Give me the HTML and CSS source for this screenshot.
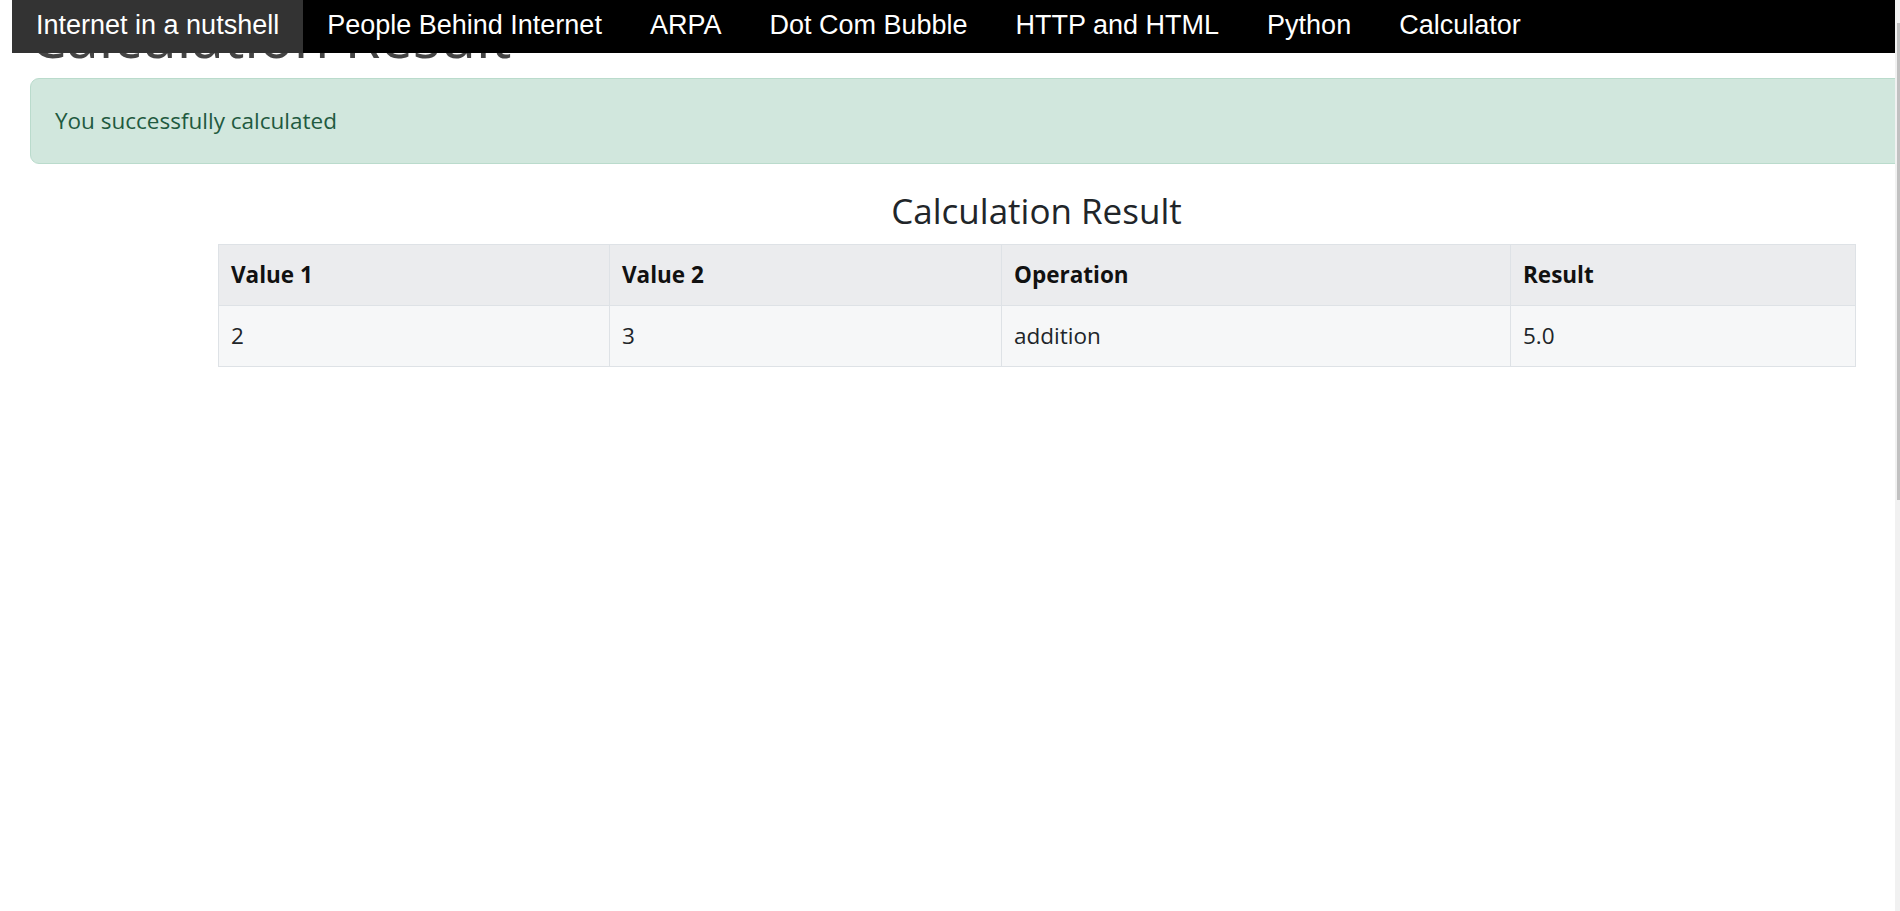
FILE: index.html
```html
<!DOCTYPE html>
<html lang="en">
<head>
<meta charset="utf-8">
<title>Calculation Result</title>
<link rel="stylesheet" href="styles.css">
</head>
<body>
<nav class="topnav">
  <a class="nav-link active" href="#">Internet in a nutshell</a>
  <a class="nav-link" href="#">People Behind Internet</a>
  <a class="nav-link" href="#">ARPA</a>
  <a class="nav-link" href="#">Dot Com Bubble</a>
  <a class="nav-link" href="#">HTTP and HTML</a>
  <a class="nav-link" href="#">Python</a>
  <a class="nav-link" href="#">Calculator</a>
</nav>
<main class="page">
  <h1 class="page-title">Calculation Result</h1>
  <div class="alert">You successfully calculated</div>
  <section class="result">
    <h4 class="result-title">Calculation Result</h4>
    <table class="result-table">
      <colgroup>
        <col class="col-v1">
        <col class="col-v2">
        <col class="col-op">
        <col class="col-res">
      </colgroup>
      <thead>
        <tr><th>Value 1</th><th>Value 2</th><th>Operation</th><th>Result</th></tr>
      </thead>
      <tbody>
        <tr><td>2</td><td>3</td><td>addition</td><td>5.0</td></tr>
      </tbody>
    </table>
  </section>
</main>
<div class="scrollbar" aria-hidden="true"><div class="scrollbar-thumb"></div></div>
</body>
</html>
```

FILE: styles.css
```css
html, body {
  margin: 0;
  padding: 0;
  background: #fff;
}
body {
  font-family: "Open Sans", "Noto Sans", sans-serif;
  color: #212529;
  overflow-x: hidden;
}

.topnav {
  position: fixed;
  top: 0;
  left: 12px;
  right: 0;
  z-index: 10;
  display: flex;
  background: #000;
  height: 53px;
}
.nav-link {
  display: block;
  padding: 8px 24px 10px;
  font-family: "Liberation Sans", Arial, sans-serif;
  font-size: 27px;
  line-height: 35px;
  color: #fff;
  text-decoration: none;
}
.nav-link.active {
  background: #333;
}

.page {
  padding: 0 0 0 30px;
}
.page-title {
  margin: 0;
  font-size: 58px;
  line-height: 72px;
  font-weight: 500;
  color: #444;
}

.alert {
  margin: 6px -20px 25px 0;
  padding: 24px;
  border: 1px solid #badbcc;
  border-radius: 9px;
  background: #d1e7dd;
  color: #1f5a40;
  font-size: 22.5px;
  line-height: 36px;
}

.result {
  margin: 0 45px 0 188px;
}
.result-title {
  margin: 0 0 12px;
  text-align: center;
  font-size: 35px;
  line-height: 43px;
  font-weight: 500;
  color: #212529;
}

.result-table {
  width: 100%;
  border-collapse: collapse;
  table-layout: fixed;
  border: 1px solid #dee2e6;
  font-size: 22.5px;
}
.col-v1 { width: 391px; }
.col-v2 { width: 392px; }
.col-op { width: 509px; }
.col-res { width: 345px; }
.result-table th,
.result-table td {
  padding: 12px;
  line-height: 36px;
  border: 1px solid #dee2e6;
  text-align: left;
  color: #212529;
}
.result-table th {
  font-weight: 700;
  color: #111;
  background: #ebecee;
}
.result-table td {
  background: #f6f7f8;
}

.scrollbar {
  position: fixed;
  top: 0;
  right: 0;
  bottom: 0;
  width: 5px;
  background: #f1f1f1;
  z-index: 20;
}
.scrollbar-thumb {
  margin: 23px 0 0 2px;
  height: 477px;
  background: #c1c1c1;
}
```
